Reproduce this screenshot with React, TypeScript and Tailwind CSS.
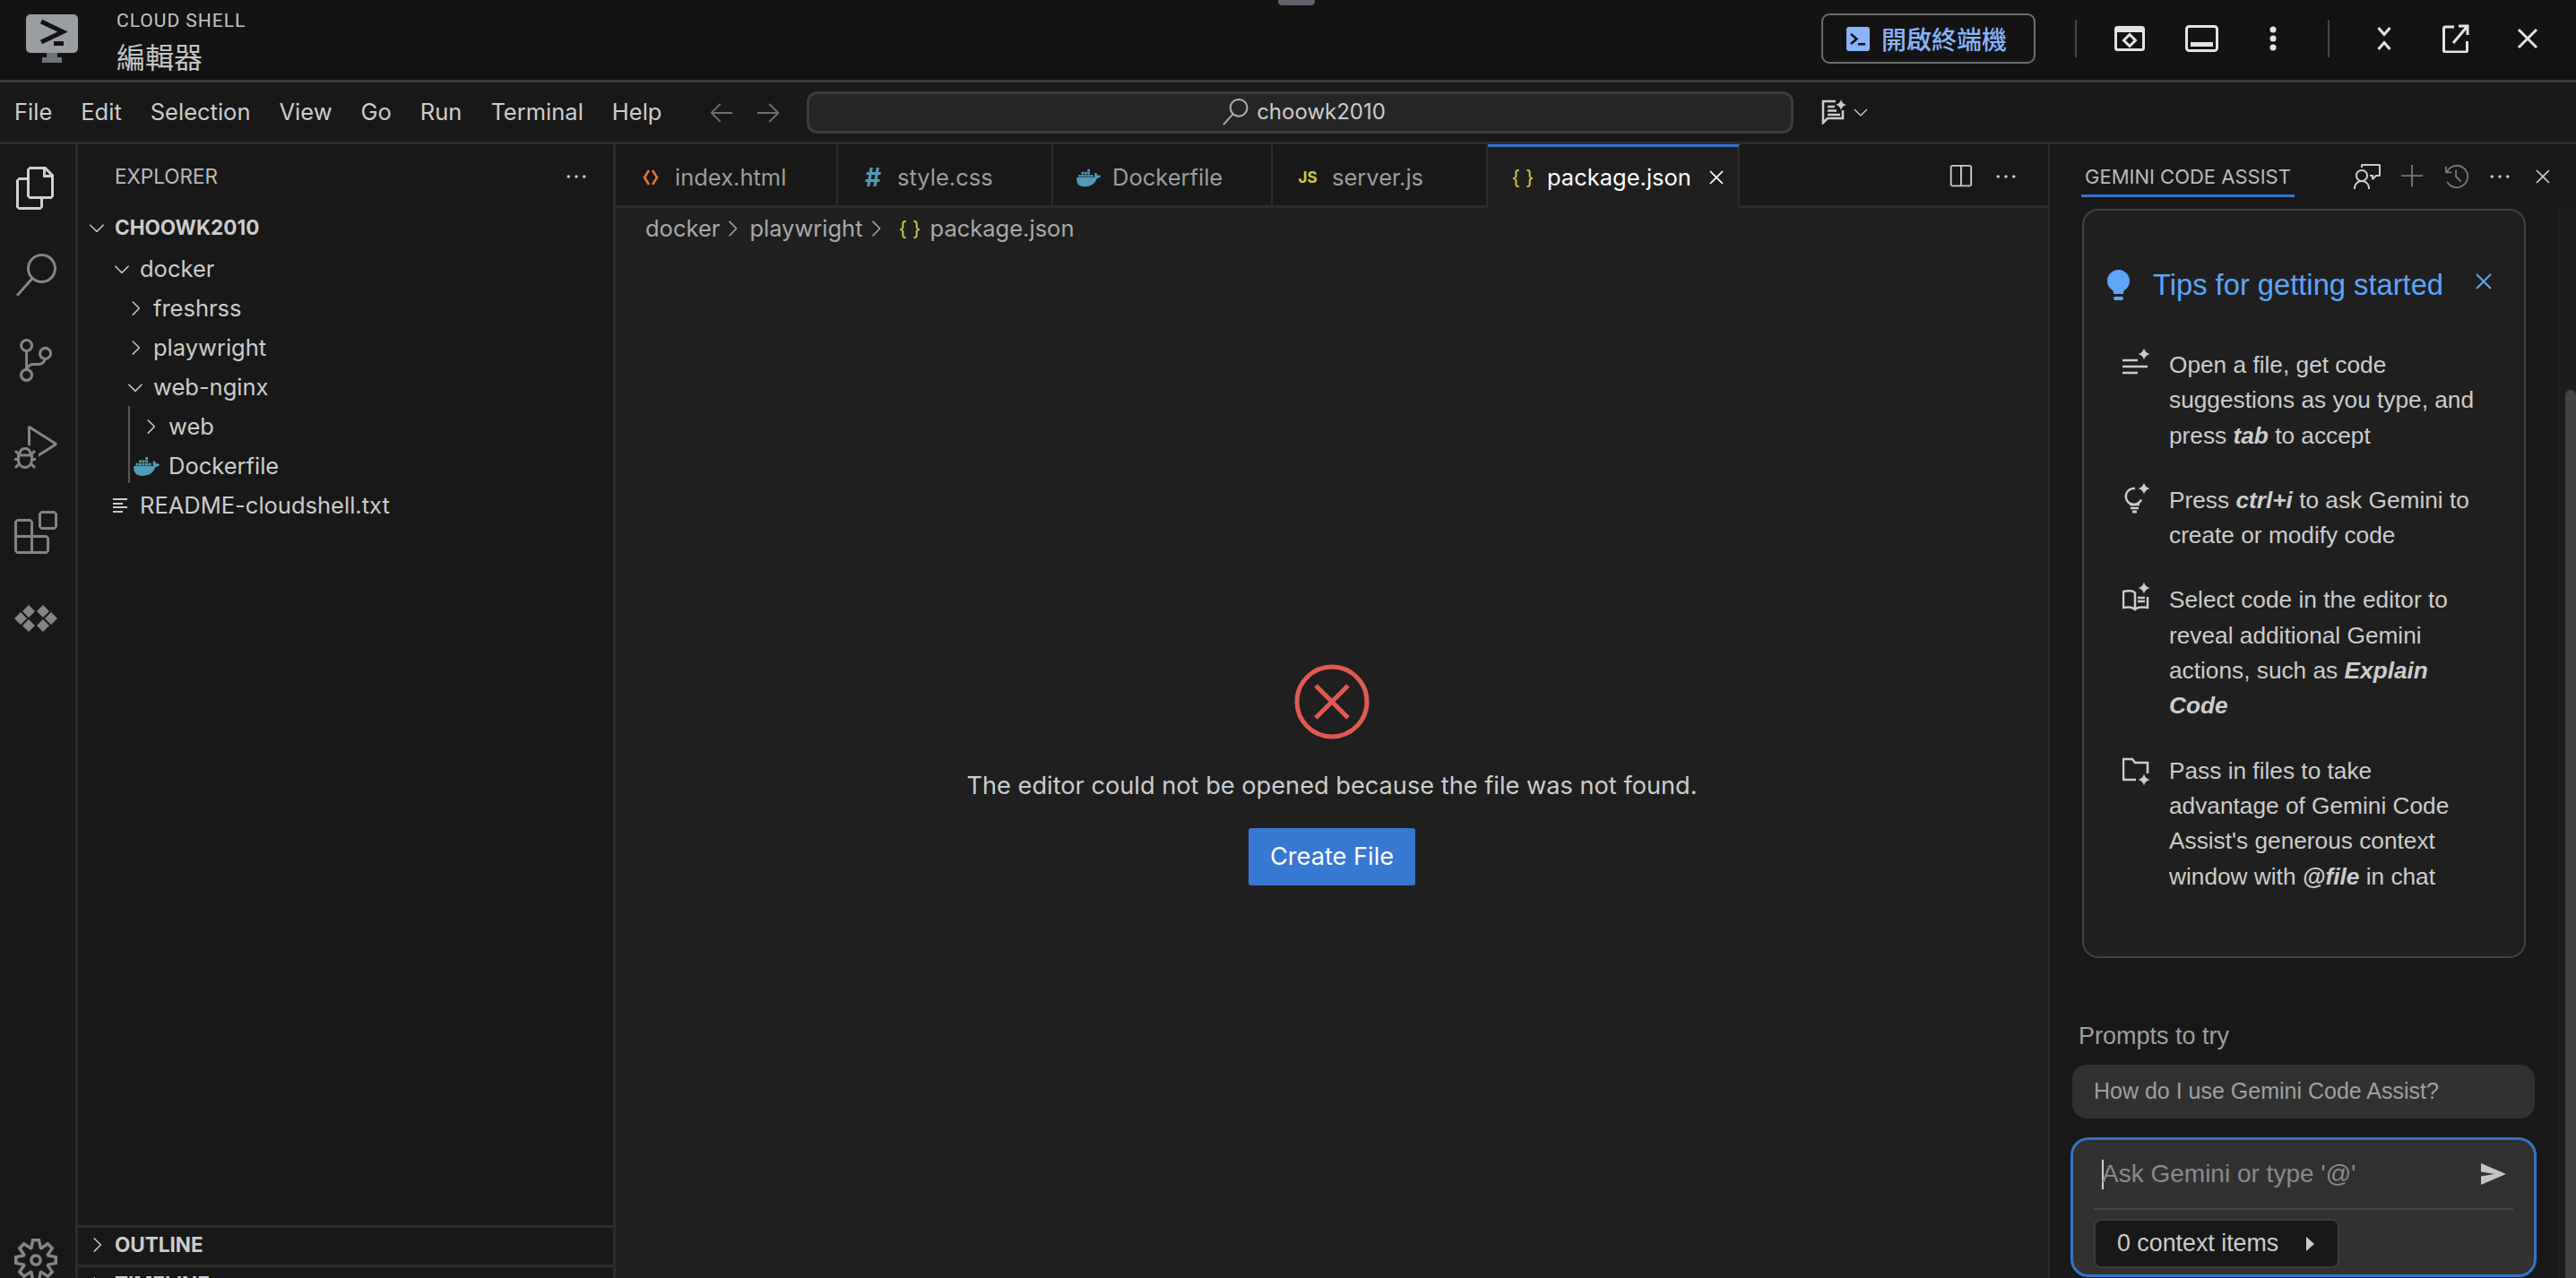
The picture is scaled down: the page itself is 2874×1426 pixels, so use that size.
import { SiDocker } from 'react-icons/si'
import {
  VscAdd,
  VscArrowLeft,
  VscArrowRight,
  VscChevronDown,
  VscChevronRight,
  VscClose,
  VscDebugAlt,
  VscEllipsis,
  VscExtensions,
  VscFeedback,
  VscFiles,
  VscHistory,
  VscSearch,
  VscSettingsGear,
  VscSourceControl,
  VscSplitHorizontal,
} from 'react-icons/vsc'

const sparkle = (cx: number, cy: number, r: number) =>
  `M${cx} ${cy - r}Q${cx + r * 0.2} ${cy - r * 0.2} ${cx + r} ${cy}Q${cx + r * 0.2} ${cy + r * 0.2} ${cx} ${cy + r}Q${cx - r * 0.2} ${cy + r * 0.2} ${cx - r} ${cy}Q${cx - r * 0.2} ${cy - r * 0.2} ${cx} ${cy - r}Z`

function CloudShellLogo() {
  return (
    <svg width="58" height="54" viewBox="0 0 58 54" className="shrink-0">
      <rect x="0" y="0" width="58" height="43" rx="5" fill="#9a9da2" />
      <rect x="23" y="43" width="12" height="5" fill="#6f7277" />
      <rect x="18" y="48" width="22" height="6" fill="#6f7277" />
      <path d="M17 8 41 19.500 17 31" fill="none" stroke="#131314" strokeWidth="5" />
      <rect x="31" y="30" width="11" height="5" fill="#131314" />
    </svg>
  )
}

function TopBarIcons() {
  return (
    <>
      <div className="flex h-[54px] w-[80px] items-center justify-center">
        <svg width="34" height="28" viewBox="0 0 34 28">
          <rect x="1.500" y="1.500" width="31" height="25" rx="2" fill="none" stroke="#e3e3e3" strokeWidth="3" />
          <rect x="1" y="1" width="32" height="6" fill="#e3e3e3" />
          <path d="M17 9.500 23.500 16 17 22.500 10.500 16Z" fill="none" stroke="#e3e3e3" strokeWidth="3" />
        </svg>
      </div>
      <div className="flex h-[54px] w-[80px] items-center justify-center">
        <svg width="37" height="30" viewBox="0 0 37 30">
          <rect x="1.500" y="1.500" width="34" height="27" rx="3" fill="none" stroke="#e3e3e3" strokeWidth="3" />
          <rect x="6" y="19" width="25" height="5" fill="#e3e3e3" />
        </svg>
      </div>
      <div className="flex h-[54px] w-[80px] items-center justify-center">
        <svg width="8" height="28" viewBox="0 0 8 28" fill="#e3e3e3">
          <circle cx="4" cy="4" r="3.500" />
          <circle cx="4" cy="14" r="3.500" />
          <circle cx="4" cy="24" r="3.500" />
        </svg>
      </div>
    </>
  )
}

function WindowIcons() {
  return (
    <>
      <div className="flex h-[54px] w-[80px] items-center justify-center">
        <svg width="16" height="28" viewBox="0 0 16 28" fill="none" stroke="#e3e3e3" strokeWidth="3">
          <path d="M1.500 2 8 9.500 14.500 2" />
          <path d="M1.500 26 8 18.500 14.500 26" />
        </svg>
      </div>
      <div className="flex h-[54px] w-[80px] items-center justify-center">
        <svg width="30" height="32" viewBox="0 0 30 32" fill="none" stroke="#e3e3e3" strokeWidth="3">
          <path d="M13 3H3a1.500 1.500 0 0 0-1.500 1.500v25A1.500 1.500 0 0 0 3 31h23a1.500 1.500 0 0 0 1.500-1.500V19" />
          <path d="M12 21 28 2M18 2h10v10" />
        </svg>
      </div>
      <div className="flex h-[54px] w-[80px] items-center justify-center">
        <svg width="24" height="24" viewBox="0 0 24 24" fill="none" stroke="#e3e3e3" strokeWidth="3">
          <path d="M2 2 22 22M22 2 2 22" />
        </svg>
      </div>
    </>
  )
}

function TopBar() {
  return (
    <header className="flex h-[92px] shrink-0 items-center border-b-[3px] border-[#3a3a3b] bg-[#131314] pb-[3px] pl-[29px] pr-[14px]">
      <CloudShellLogo />
      <div className="ml-[43px] flex flex-col pt-[7px]">
        <span className="font-['Roboto',sans-serif] text-[21px] leading-[28px] tracking-[1px] text-[#c4c7c5]">
          CLOUD SHELL
        </span>
        <span className="mt-[3px] font-['Noto_Sans_CJK_TC',sans-serif] text-[32px] leading-[44px] text-[#c4c7c5]">
          編輯器
        </span>
      </div>
      <div className="flex-1" />
      <button className="flex h-[56px] w-[239px] items-center rounded-[9px] border-2 border-[#6a6d70] pl-[26px]">
        <svg width="26" height="27" viewBox="0 0 26 27">
          <rect width="26" height="27" rx="3" fill="#8ab4f8" />
          <path d="M5 8 11.500 13.500 5 19" fill="none" stroke="#131314" strokeWidth="2.500" />
          <rect x="13" y="18" width="8" height="2.500" fill="#131314" />
        </svg>
        <span className="ml-[13px] font-['Noto_Sans_CJK_TC',sans-serif] text-[28px] font-medium leading-none text-[#8ab4f8]">
          開啟終端機
        </span>
      </button>
      <div className="ml-[44px] mr-[19px] h-[42px] w-[2px] bg-[#444746]" />
      <TopBarIcons />
      <div className="ml-[21px] mr-[21px] h-[42px] w-[2px] bg-[#444746]" />
      <WindowIcons />
    </header>
  )
}

function MenuBar() {
  return (
    <div className="flex h-[69px] shrink-0 items-center border-b-[3px] border-[#2b2b2b] bg-[#181818] pl-[16px] text-[25.500px] text-[#cccccc]">
      <nav className="flex w-[724px] gap-[32px]">
        {['File', 'Edit', 'Selection', 'View', 'Go', 'Run', 'Terminal', 'Help'].map((m) => (
          <span key={m}>{m}</span>
        ))}
      </nav>
      <VscArrowLeft className="ml-[49px] size-[32px] text-[#6f6f6f]" />
      <VscArrowRight className="ml-[20px] size-[32px] text-[#6f6f6f]" />
      <div className="ml-[27px] flex h-[47px] w-[1101px] items-center justify-center gap-[9px] rounded-[12px] border-[3px] border-[#3c3c3c] bg-[#252526] pl-[8px]">
        <VscSearch className="size-[30px] text-[#b0b0b0]" />
        <span className="text-[24px] text-[#cccccc]">choowk2010</span>
      </div>
      <svg width="28" height="28" viewBox="0 0 28 28" fill="none" stroke="#cccccc" strokeWidth="2.500" className="ml-[31px]">
        <path d="M16 2H2v24l5-5h17v-9" />
        <path d="M7 8h8M7 12.500h10M7 17h14" />
        <path d={sparkle(22, 6, 6)} fill="#cccccc" stroke="none" />
      </svg>
      <VscChevronDown className="ml-[4px] size-[24px] text-[#cccccc]" />
    </div>
  )
}

function ActivityBar() {
  const iconClass = 'size-[48px] shrink-0 text-[#858585]'
  return (
    <aside className="flex w-[87px] shrink-0 flex-col items-center border-r-[3px] border-[#2b2b2b] bg-[#181818] pr-[4px]">
      <VscFiles className="mt-[25px] size-[48px] shrink-0 text-[#d0d0d0]" />
      <VscSearch className={`mt-[49px] ${iconClass}`} />
      <VscSourceControl className={`mt-[47px] ${iconClass}`} />
      <VscDebugAlt className={`mt-[49px] ${iconClass}`} />
      <VscExtensions className={`mt-[47px] ${iconClass}`} />
      <svg width="48" height="32" viewBox="0 0 48 32" fill="#858585" className="mt-[56px] shrink-0">
        <path d="M16 1 23 8 16 15 9 8ZM7 9 14 16 7 23 0 16ZM16 17 23 24 16 31 9 24ZM32 1 39 8 32 15 25 8ZM41 9 48 16 41 23 34 16ZM32 17 39 24 32 31 25 24Z" />
      </svg>
      <div className="flex-1" />
      <VscSettingsGear className="mb-[-4px] size-[48px] shrink-0 text-[#858585]" />
    </aside>
  )
}

type TreeRow = {
  label: string
  indent: string
  icon: 'open' | 'closed' | 'docker' | 'text'
}

const treeRows: TreeRow[] = [
  { label: 'docker', indent: 'pl-[29px]', icon: 'open' },
  { label: 'freshrss', indent: 'pl-[44px]', icon: 'closed' },
  { label: 'playwright', indent: 'pl-[44px]', icon: 'closed' },
  { label: 'web-nginx', indent: 'pl-[44px]', icon: 'open' },
  { label: 'web', indent: 'pl-[61px]', icon: 'closed' },
  { label: 'Dockerfile', indent: 'pl-[61px]', icon: 'docker' },
  { label: 'README-cloudshell.txt', indent: 'pl-[29px]', icon: 'text' },
]

function TreeIcon({ icon }: { icon: TreeRow['icon'] }) {
  if (icon === 'open') return <VscChevronDown className="size-[26px] text-[#cccccc]" />
  if (icon === 'closed') return <VscChevronRight className="size-[26px] text-[#cccccc]" />
  if (icon === 'docker') return <SiDocker className="mr-[10px] size-[29px] text-[#519aba]" />
  return (
    <svg width="18" height="18" viewBox="0 0 18 18" fill="none" stroke="#cccccc" strokeWidth="2" className="ml-[-4px]">
      <path d="M1 2h16M1 7h11M1 11h16M1 16h11" />
    </svg>
  )
}

function Sidebar() {
  return (
    <aside className="relative flex w-[600px] shrink-0 flex-col overflow-hidden border-r-[3px] border-[#2b2b2b] bg-[#181818] text-[#cccccc]">
      <div className="h-[1206px] shrink-0">
        <div className="flex h-[71px] items-center justify-between pl-[41px] pr-[27px]">
          <span className="text-[22.500px] text-[#bbbbbb]">EXPLORER</span>
          <VscEllipsis className="size-[28px]" />
        </div>
        <div className="flex h-[44px] items-center pl-px">
          <span className="flex w-[40px] justify-center">
            <VscChevronDown className="size-[26px]" />
          </span>
          <span className="text-[22.500px] font-bold">CHOOWK2010</span>
        </div>
        <div className="pt-[2px]">
          {treeRows.map((row) => (
            <div key={row.label} className={`flex h-[44px] items-center text-[25.500px] ${row.indent}`}>
              <span className="flex w-[40px] justify-center">
                <TreeIcon icon={row.icon} />
              </span>
              {row.label}
            </div>
          ))}
        </div>
      </div>
      <div className="absolute left-[56px] top-[292px] h-[86px] w-[2px] bg-[#585858]" />
      <div className="flex h-[44px] shrink-0 items-center border-t-[3px] border-[#2b2b2b] pb-[3px] pl-px">
        <span className="flex w-[40px] justify-center">
          <VscChevronRight className="size-[26px]" />
        </span>
        <span className="text-[22.500px] font-bold">OUTLINE</span>
      </div>
      <div className="flex h-[44px] shrink-0 items-center border-t-[3px] border-[#2b2b2b] pb-[3px] pl-px">
        <span className="flex w-[40px] justify-center">
          <VscChevronRight className="size-[26px]" />
        </span>
        <span className="text-[22.500px] font-bold">TIMELINE</span>
      </div>
    </aside>
  )
}

function FileIcon({ type }: { type: string }) {
  if (type === 'html')
    return (
      <svg width="18" height="20" viewBox="0 0 18 20" fill="none" stroke="#e37933" strokeWidth="2.500">
        <path d="M7 2 2 10 7 18M11 2 16 10 11 18" />
      </svg>
    )
  if (type === 'css') return <span className="text-[28px] font-bold leading-none text-[#519aba]">#</span>
  if (type === 'docker') return <SiDocker className="size-[27px] text-[#519aba]" />
  if (type === 'js') return <span className="text-[17px] font-bold leading-none text-[#cbcb41]">JS</span>
  return <span className="text-[22px] leading-none text-[#cbcb41]">{'{ }'}</span>
}

const tabs = [
  { name: 'index.html', type: 'html', width: 'w-[248px]' },
  { name: 'style.css', type: 'css', width: 'w-[240px]' },
  { name: 'Dockerfile', type: 'docker', width: 'w-[245px]' },
  { name: 'server.js', type: 'js', width: 'w-[240px]' },
]

function TabBar() {
  return (
    <div className="flex h-[71px] shrink-0 items-stretch bg-[#181818] text-[25.500px]">
      {tabs.map((tab) => (
        <div
          key={tab.name}
          className={`flex items-center border-b-[3px] border-r-2 border-[#2b2b2b] pl-[24px] pt-[6px] text-[#9d9d9d] ${tab.width}`}
        >
          <span className="mr-[12px] flex w-[30px] justify-center">
            <FileIcon type={tab.type} />
          </span>
          {tab.name}
        </div>
      ))}
      <div className="flex w-[281px] items-center border-r-2 border-t-[3px] border-[#2b2b2b] border-t-[#3375cc] bg-[#1f1f1f] pl-[24px] text-white">
        <span className="mr-[12px] flex w-[30px] justify-center">
          <FileIcon type="json" />
        </span>
        package.json
        <VscClose className="ml-[14px] size-[28px]" />
      </div>
      <div className="flex flex-1 items-center justify-end gap-[22px] border-b-[3px] border-[#2b2b2b] pr-[33px] pt-[3px] text-[#cccccc]">
        <VscSplitHorizontal className="size-[30px]" />
        <VscEllipsis className="size-[28px]" />
      </div>
    </div>
  )
}

function Breadcrumbs() {
  return (
    <div className="flex h-[48px] shrink-0 items-center pb-[2px] pl-[33px] text-[25.500px] text-[#a9a9a9]">
      docker
      <VscChevronRight className="size-[28px]" />
      <span className="ml-[5px]">playwright</span>
      <VscChevronRight className="size-[28px]" />
      <span className="ml-[12px] flex w-[35px] justify-start text-[22px] text-[#cbcb41]">{'{ }'}</span>
      <span>package.json</span>
    </div>
  )
}

function MissingFile() {
  return (
    <div className="flex flex-1 flex-col items-center bg-[#1f1f1f] pt-[461px]">
      <svg width="84" height="84" viewBox="0 0 84 84" fill="none" stroke="#e05a52" strokeWidth="5">
        <circle cx="42" cy="42" r="39" />
        <path d="M24 24 60 60M60 24 24 60" />
      </svg>
      <p className="mt-[34px] text-[27.200px] leading-[36px] text-[#cccccc]">
        The editor could not be opened because the file was not found.
      </p>
      <button className="mt-[29px] flex h-[64px] w-[186px] items-center justify-center rounded-[3px] bg-[#3778d2] text-[27.200px] text-white">
        Create File
      </button>
    </div>
  )
}

function TipLines() {
  return (
    <svg width="30" height="32" viewBox="0 0 30 32" fill="none" stroke="#cccccc" strokeWidth="2.500">
      <path d="M0 13h17M0 20h28M0 27h17" />
      <path d={sparkle(24, 6, 6.500)} fill="#cccccc" stroke="none" />
    </svg>
  )
}

function TipBulb() {
  return (
    <svg width="30" height="36" viewBox="0 0 30 36" fill="none" stroke="#cccccc" strokeWidth="2.500">
      <path d="M14 6a9 9 0 1 0 7 12.500" />
      <path d="M8 24h11M9 28h9" />
      <path d="M11 32h5" strokeWidth="3" />
      <path d={sparkle(24, 6, 6.500)} fill="#cccccc" stroke="none" />
    </svg>
  )
}

function TipBook() {
  return (
    <svg width="30" height="32" viewBox="0 0 30 32" fill="none" stroke="#cccccc" strokeWidth="2.500">
      <path d="M14 11c-3-2-8-2-13-1v18c5-1 10-1 13 2 2-2 7-3 14-2V16" />
      <path d="M14 11v18M17 17h8M17 21h8" />
      <path d={sparkle(24, 6, 6.500)} fill="#cccccc" stroke="none" />
    </svg>
  )
}

function TipFolder() {
  return (
    <svg width="30" height="34" viewBox="0 0 30 34" fill="none" stroke="#cccccc" strokeWidth="2.500" className="mt-[4px]">
      <path d="M15 25H1V2h10l3 4h14v12" />
      <path d={sparkle(24, 25, 6.500)} fill="#cccccc" stroke="none" />
    </svg>
  )
}

function TipsCard() {
  return (
    <section className="ml-[36px] h-[836px] w-[495px] shrink-0 rounded-[18px] border-2 border-[#414141] bg-[#1f1f1f] text-[26.250px] leading-[39.300px] text-[#cccccc]">
      <div className="flex items-center pl-[26px] pt-[63px]">
        <svg width="25" height="34" viewBox="0 0 25 34" fill="#5ea5f8">
          <path d="M12.500 0C5.600 0 0 5.600 0 12.500c0 4.400 2.200 8 5.500 10.200 1 .7 1.500 1.500 1.500 3V27h11v-1.300c0-1.500.5-2.300 1.500-3 3.300-2.200 5.500-5.800 5.500-10.200C25 5.600 19.400 0 12.500 0z" />
          <rect x="7" y="30" width="11" height="4" rx="2" />
        </svg>
        <h2 className="ml-[26px] text-[32.700px] leading-[40px] text-[#5ea5f8]">Tips for getting started</h2>
        <VscClose className="ml-[29px] mt-[-8px] size-[32px] text-[#5ea5f8]" />
      </div>
      <div className="mt-[50px] flex flex-col gap-[33px] pl-[43px]">
        <div className="flex">
          <span className="w-[52px] shrink-0 pt-[1px]">
            <TipLines />
          </span>
          <p className="w-[345px]">
            Open a file, get code suggestions as you type, and press <b className="italic">tab</b> to accept
          </p>
        </div>
        <div className="flex">
          <span className="w-[52px] shrink-0">
            <TipBulb />
          </span>
          <p className="w-[345px]">
            Press <b className="italic">ctrl+i</b> to ask Gemini to create or modify code
          </p>
        </div>
        <div className="flex">
          <span className="w-[52px] shrink-0">
            <TipBook />
          </span>
          <p className="w-[345px]">
            Select code in the editor to reveal additional Gemini actions, such as <b className="italic">Explain Code</b>
          </p>
        </div>
        <div className="flex">
          <span className="w-[52px] shrink-0">
            <TipFolder />
          </span>
          <p className="w-[345px]">
            Pass in files to take advantage of Gemini Code Assist's generous context window with{' '}
            <b className="italic">@file</b> in chat
          </p>
        </div>
      </div>
    </section>
  )
}

function ChatInput() {
  return (
    <div className="ml-[23px] mt-[21px] flex h-[156px] w-[520px] shrink-0 flex-col rounded-[20px] border-[3px] border-[#3574c4] bg-[#313131] px-[23px]">
      <div className="flex h-[78px] shrink-0 items-center border-b-2 border-[#444444]">
        <span className="ml-[9px] h-[33px] w-[2px] bg-[#cccccc]" />
        <span className="ml-[-2px] flex-1 text-[28px] text-[#8a8a8a]">Ask Gemini or type '@'</span>
        <svg width="28" height="24" viewBox="0 0 28 24" fill="#c5c5c5" className="mr-[8px]">
          <path d="M0 0 28 12 0 24V14.500L15 12 0 9.500Z" />
        </svg>
      </div>
      <div className="mt-[10px] flex h-[55px] w-[274px] items-center rounded-[8px] border-2 border-[#3c3c3c] bg-[#181818] pl-[24px] text-[26.800px] text-[#cccccc]">
        0 context items
        <svg width="9" height="16" viewBox="0 0 9 16" fill="#cccccc" className="ml-[31px]">
          <path d="M0 0 9 8 0 16Z" />
        </svg>
      </div>
    </div>
  )
}

function GeminiPanel() {
  return (
    <aside className="relative flex w-[589px] shrink-0 flex-col border-l-2 border-[#2b2b2b] bg-[#181818]">
      <div className="flex h-[72px] shrink-0 items-start pl-[35px] text-[#cccccc]">
        <div className="flex h-[59px] items-center border-b-[3px] border-[#3375cc] px-[4px] pt-[16px] text-[22px] text-[#bbbbbb]">
          GEMINI CODE ASSIST
        </div>
        <div className="ml-[66px] flex h-[59px] items-center gap-[19px] pt-[13px]">
          <VscFeedback className="size-[32px]" />
          <VscAdd className="size-[30px] text-[#777777]" />
          <VscHistory className="size-[30px] text-[#777777]" />
          <VscEllipsis className="size-[28px]" />
          <VscClose className="ml-[1px] size-[28px]" />
        </div>
      </div>
      <div className="absolute bottom-0 right-0 top-[71px] w-[20px] bg-[#1c1c1c]">
        <div className="absolute bottom-0 right-0 top-[203px] w-[12px] rounded-t-[6px] bg-[#424242]" />
      </div>
      <div className="flex flex-col font-['Liberation_Sans',sans-serif]">
        <TipsCard />
        <p className="ml-[32px] mt-[69px] text-[27px] leading-[36px] text-[#9e9e9e]">Prompts to try</p>
        <div className="ml-[25px] mt-[14px] flex h-[60px] w-[516px] shrink-0 items-center rounded-[16px] bg-[#313131] pl-[24px] text-[25px] text-[#a0a0a0]">
          How do I use Gemini Code Assist?
        </div>
        <ChatInput />
      </div>
    </aside>
  )
}

export default function App() {
  return (
    <div className="relative flex h-screen w-screen flex-col overflow-hidden bg-[#181818] font-['Inter',sans-serif]">
      <div className="absolute left-[1426px] top-[-3px] h-[9px] w-[41px] rounded-[5px] bg-[#5f6368]" />
      <TopBar />
      <MenuBar />
      <div className="flex min-h-0 flex-1">
        <ActivityBar />
        <Sidebar />
        <main className="flex min-w-0 flex-1 flex-col bg-[#1f1f1f]">
          <TabBar />
          <Breadcrumbs />
          <MissingFile />
        </main>
        <GeminiPanel />
      </div>
    </div>
  )
}
